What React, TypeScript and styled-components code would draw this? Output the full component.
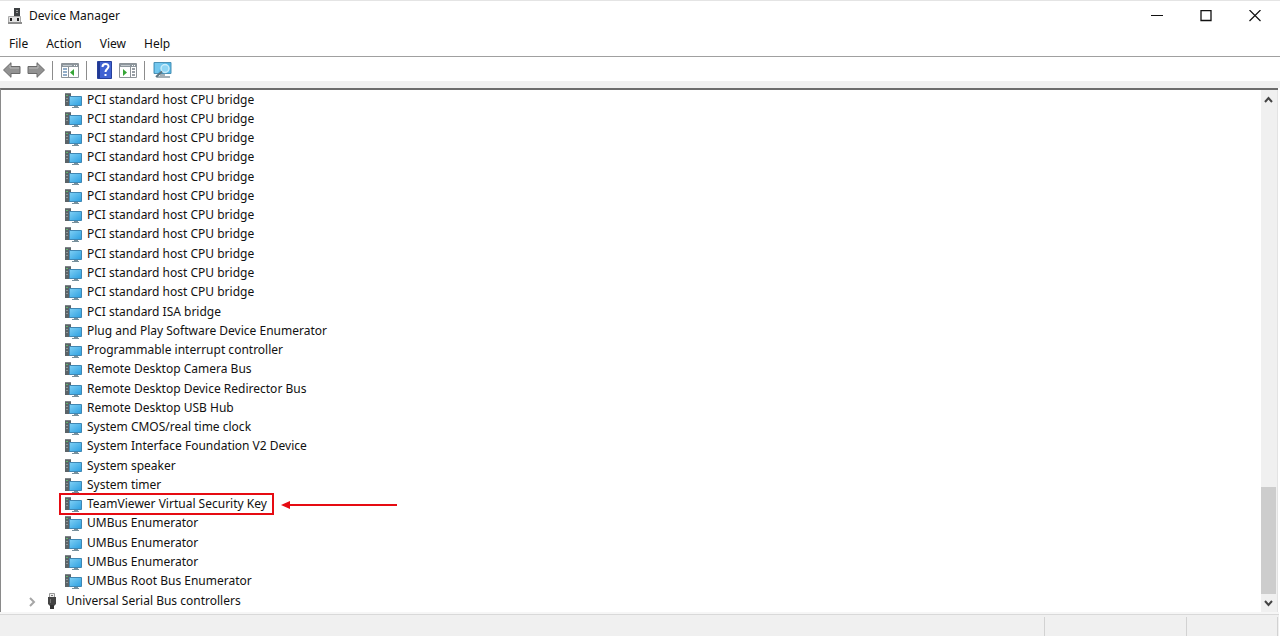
import React from "react";
import styled, { createGlobalStyle } from "styled-components";

const GlobalStyle = createGlobalStyle`
  *, *::before, *::after { box-sizing: border-box; }
  body { margin: 0; background: #fff; }
`;

const Window = styled.div`
  display: flex;
  flex-direction: column;
  min-height: 100vh;
  border-top: 1px solid #e4e4e4;
  background: #fff;
  color: #111;
  font-family: "Noto Sans", "Open Sans", sans-serif;
  font-size: 12px;
  line-height: 18px;
`;

const TitleBar = styled.header`
  display: flex;
  align-items: center;
  height: 30px;
  padding-left: 7px;
`;

const Title = styled.h1`
  flex: 1;
  margin: 0 0 0 6px;
  font-size: 12px;
  font-weight: 400;
`;

const PlainButton = styled.button`
  display: flex;
  align-items: center;
  justify-content: center;
  margin: 0;
  padding: 0;
  border: 0;
  background: transparent;
  color: inherit;
  font: inherit;
`;

const CaptionButtons = styled.div`
  display: flex;
  padding-right: 1px;
`;

const CaptionButton = styled(PlainButton)`
  width: 49px;
  height: 28px;
`;

const MenuBar = styled.nav`
  display: flex;
  gap: 18px;
  height: 26px;
  padding: 3px 9px 0;
  border-bottom: 1px solid #a0a0a0;
`;

const MenuButton = styled(PlainButton)`
  height: 19px;
`;

const Toolbar = styled.div`
  display: flex;
  align-items: center;
  height: 24px;
  padding-top: 2px;
`;

const ToolButton = styled(PlainButton)`
  width: 24px;
  height: 22px;
`;

const Separator = styled.span`
  width: 1px;
  height: 19px;
  margin: 0 5px 0 4px;
  background: #8c8c8c;
`;

const Band = styled.div`
  height: 7px;
  background: #f0f0f0;
`;

const Body = styled.main`
  display: flex;
  flex: 1;
  margin-right: 2px;
  border: solid #8a8a8a;
  border-width: 2px 0 0 1px;
  border-top-color: #6c6c6c;
`;

const Tree = styled.ul`
  display: flex;
  flex: 1;
  flex-direction: column;
  margin: 0;
  padding: 0 0 2px;
  list-style: none;
`;

const Row = styled.li<{ $root?: boolean }>`
  display: flex;
  flex: 1 0 19px;
  align-items: center;
  gap: ${(p) => (p.$root ? 8 : 4)}px;
  padding-left: ${(p) => (p.$root ? 25 : 64)}px;
  white-space: nowrap;
`;

const Label = styled.span`
  line-height: 18px;
`;

const Target = styled.span`
  position: relative;
  display: flex;
  align-items: center;
  gap: 4px;
`;

const Highlight = styled.span`
  position: absolute;
  inset: -2px -7px -2px -6px;
  border: 2px solid #e60b12;
`;

const Pointer = styled.svg`
  position: absolute;
  top: 4px;
  left: calc(100% + 14px);
`;

const ScrollBar = styled.div`
  display: flex;
  flex-direction: column;
  width: 17px;
  padding-right: 1px;
  border-right: 1px solid #e3e3e3;
  background: #f0f0f0;
`;

const ScrollButton = styled(PlainButton)`
  height: 18px;
  color: #444;
`;

const Track = styled.div`
  display: flex;
  flex: 1;
  flex-direction: column;
  justify-content: flex-end;
`;

const Thumb = styled.div`
  height: 22%;
  background: #cdcdcd;
`;

const StatusBar = styled.footer`
  display: flex;
  height: 22px;
  margin: 2px 1px 0 0;
  padding: 2px 1px 0 0;
  border-top: 1px solid #d9d9d9;
  background: #f0f0f0;
  box-shadow: 0 -2px 0 #f6f6f6;
`;

const StatusCell = styled.div<{ $width?: number }>`
  flex: ${(p) => (p.$width ? `0 0 ${p.$width}px` : "1")};
  border-right: 1px solid #d2d2d2;
`;

const AppIcon = () => (
  <svg width="16" height="18" viewBox="0 0 16 18" aria-hidden="true">
    <path d="M7 1h6v8H7z" fill="#3e4143" />
    <path d="M9 3h2v1H9zM9 5h2v1H9z" fill="#999" />
    <path d="M1.500 9.500h12v6h-12z" fill="#e2e2e2" stroke="#aaa" />
    <path d="M1 15h14v2H1z" fill="#8d8d8d" />
    <path d="M3 11h2v3H3zM10 11h2v3h-2z" fill="#222" />
  </svg>
);

const DeviceIcon = () => (
  <svg width="18" height="16" viewBox="0 0 18 16" aria-hidden="true">
    <defs>
      <linearGradient id="screen" x1="0" y1="0" x2="1" y2="1">
        <stop offset="0" stopColor="#7fd0f5" />
        <stop offset="1" stopColor="#2c9fe0" />
      </linearGradient>
    </defs>
    <path d="M0 1h6v13H0z" fill="#5c6468" />
    <path d="M0 1h6v1H0z" fill="#7f8588" />
    <path d="M1 6h2v1H1zM1 9h2v1H1z" fill="#8d9598" />
    <path d="M1 3h2v1H1z" fill="#62b46d" />
    <path d="M4.500 4.500h12v9h-12z" fill="url(#screen)" stroke="#3f87b3" />
    <path d="M9 14h4v1H9zM7 15h7v1H7z" fill="#78909c" />
  </svg>
);

const UsbIcon = () => (
  <svg width="12" height="18" viewBox="0 0 12 18" aria-hidden="true">
    <path d="M3.500 1.500h5v4h-5z" fill="#eee" stroke="#999" />
    <path d="M5 3h2v1H5z" fill="#777" />
    <path d="M2 5h8v7l-2 2H4l-2-2z" fill="#444" />
    <path d="M4 7h1v4H4z" fill="#777" />
    <path d="M4 13h4v4H4z" fill="#333" />
  </svg>
);

const ArrowIcon = ({ forward }: { forward?: boolean }) => (
  <svg width="18" height="16" viewBox="0 0 18 16" aria-hidden="true">
    <path
      d={forward ? "M17.500 8L10 .7V4.500H1v7h9v3.800z" : "M.5 8L8 .7V4.500h9v7H8v3.800z"}
      fill="#929292"
      stroke="#6a6a6a"
      strokeLinejoin="round"
    />
    <path d={forward ? "M2 6h9V3" : "M16 6H7V3"} fill="none" stroke="#b9b9b9" />
  </svg>
);

const PanelIcon = ({ play }: { play?: boolean }) => (
  <svg width="18" height="16" viewBox="0 0 18 16" aria-hidden="true">
    <path d="M.5 1.500h17v14H.5z" fill="#fff" stroke="#8d9398" />
    <path d="M1 2h16v3H1z" fill="#8d969d" />
    <path d="M2 3h9v1H2z" fill="#c3c9cd" />
    <path d="M13 3h1v1h-1zM15 3h1v1h-1z" fill="#fff" />
    {play ? (
      <>
        <path d="M11.500 5v10" stroke="#8d9398" />
        <path d="M13 7h3M13 10h3M13 13h3" stroke="#777f88" strokeWidth="1.500" />
        <path d="M4 7l4 3.500L4 14z" fill="#36a536" />
      </>
    ) : (
      <>
        <path d="M7.500 5v10" stroke="#8d9398" />
        <path d="M2 7h4M2 10h4M2 13h4" stroke="#6f93b8" strokeWidth="1.500" />
        <path d="M13 7l-4 3.500L13 14z" fill="#36a536" />
      </>
    )}
  </svg>
);

const HelpIcon = () => (
  <svg width="15" height="18" viewBox="0 0 15 18" aria-hidden="true">
    <path d="M.5.5h14v17H.5z" fill="#3f62d2" stroke="#27409b" />
    <path d="M1 1h2v16H1z" fill="#203995" />
    <path
      d="M5.500 6c0-4 6-4 6-.5 0 2.500-3 2.500-3 5.500M8.500 13v2"
      fill="none"
      stroke="#fff"
      strokeWidth="2"
    />
  </svg>
);

const ScanIcon = () => (
  <svg width="19" height="18" viewBox="0 0 19 18" aria-hidden="true">
    <path d="M1 1.500h17v11H1z" fill="#55b7e6" stroke="#4b91b5" />
    <path d="M2 2h8l-5 10H2z" fill="#73c7ee" />
    <path d="M7 13h5v2H7zM4 15h13v2H4z" fill="#a3afb6" />
    <circle cx="12" cy="7.500" r="4" fill="#8fd5f4" stroke="#c9ecfa" strokeWidth="1.500" />
    <path d="M9 10.500L3 16" stroke="#5d7481" strokeWidth="2" />
  </svg>
);

const Chevron = ({ d, width = 9, height = 7 }: { d: string; width?: number; height?: number }) => (
  <svg width={width} height={height} viewBox={`0 0 ${width} ${height}`} aria-hidden="true">
    <path d={d} fill="none" stroke="currentColor" strokeWidth="2" />
  </svg>
);

const Expander = styled(PlainButton)`
  width: 12px;
  height: 16px;
  padding-top: 2px;
  color: #a6a6a6;
`;

const devices = [
  ...Array<string>(11).fill("PCI standard host CPU bridge"),
  "PCI standard ISA bridge",
  "Plug and Play Software Device Enumerator",
  "Programmable interrupt controller",
  "Remote Desktop Camera Bus",
  "Remote Desktop Device Redirector Bus",
  "Remote Desktop USB Hub",
  "System CMOS/real time clock",
  "System Interface Foundation V2 Device",
  "System speaker",
  "System timer",
  "TeamViewer Virtual Security Key",
  "UMBus Enumerator",
  "UMBus Enumerator",
  "UMBus Enumerator",
  "UMBus Root Bus Enumerator",
];

const highlighted = "TeamViewer Virtual Security Key";

export default function App() {
  return (
    <Window>
      <GlobalStyle />
      <TitleBar>
        <AppIcon />
        <Title>Device Manager</Title>
        <CaptionButtons>
          <CaptionButton aria-label="Minimize">
            <svg width="12" height="12"><path d="M0 5.500h12" stroke="#111" /></svg>
          </CaptionButton>
          <CaptionButton aria-label="Maximize">
            <svg width="12" height="12"><path d="M1 .5h10v10H1z" fill="none" stroke="#111" strokeWidth="1.300" /></svg>
          </CaptionButton>
          <CaptionButton aria-label="Close">
            <svg width="12" height="12"><path d="M.5 0l11 11M11.500 0l-11 11" stroke="#111" strokeWidth="1.200" /></svg>
          </CaptionButton>
        </CaptionButtons>
      </TitleBar>
      <MenuBar aria-label="Menu">
        {["File", "Action", "View", "Help"].map((name) => (
          <MenuButton key={name}>{name}</MenuButton>
        ))}
      </MenuBar>
      <Toolbar role="toolbar" aria-label="Tools">
        <ToolButton aria-label="Back"><ArrowIcon /></ToolButton>
        <ToolButton aria-label="Forward"><ArrowIcon forward /></ToolButton>
        <Separator />
        <ToolButton aria-label="Show or hide console tree"><PanelIcon /></ToolButton>
        <Separator />
        <ToolButton aria-label="Help topics"><HelpIcon /></ToolButton>
        <ToolButton aria-label="Show or hide action pane"><PanelIcon play /></ToolButton>
        <Separator />
        <ToolButton aria-label="Scan for hardware changes"><ScanIcon /></ToolButton>
      </Toolbar>
      <Band />
      <Body>
        <Tree>
          {devices.map((name, i) => (
            <Row key={i}>
              {name === highlighted ? (
                <Target>
                  <DeviceIcon />
                  <Label>{name}</Label>
                  <Highlight />
                  <Pointer width="116" height="12" viewBox="0 0 116 12" aria-hidden="true">
                    <path d="M6 6h110" stroke="#e60b12" strokeWidth="2" />
                    <path d="M0 6l9-4v8z" fill="#e60b12" />
                  </Pointer>
                </Target>
              ) : (
                <>
                  <DeviceIcon />
                  <Label>{name}</Label>
                </>
              )}
            </Row>
          ))}
          <Row $root>
            <Expander aria-label="Expand">
              <Chevron d="M1 1l4 4-4 4" width={7} height={10} />
            </Expander>
            <UsbIcon />
            <Label>Universal Serial Bus controllers</Label>
          </Row>
        </Tree>
        <ScrollBar>
          <ScrollButton aria-label="Scroll up"><Chevron d="M1 6l3.500-4L8 6" /></ScrollButton>
          <Track><Thumb /></Track>
          <ScrollButton aria-label="Scroll down"><Chevron d="M1 1l3.500 4L8 1" /></ScrollButton>
        </ScrollBar>
      </Body>
      <StatusBar>
        <StatusCell />
        <StatusCell $width={142} />
        <StatusCell $width={91} />
      </StatusBar>
    </Window>
  );
}
